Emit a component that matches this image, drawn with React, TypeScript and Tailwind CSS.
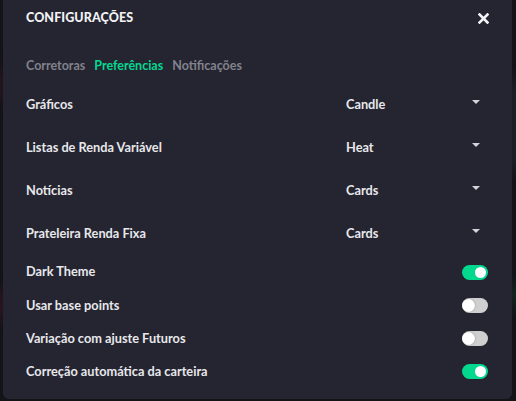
const font = { fontFamily: "Lato, 'Open Sans', sans-serif" };

type SelectRow = { label: string; value: string };
type ToggleRow = { label: string; on: boolean; h: string };

const selects: SelectRow[] = [
  { label: "Gráficos", value: "Candle" },
  { label: "Listas de Renda Variável", value: "Heat" },
  { label: "Notícias", value: "Cards" },
  { label: "Prateleira Renda Fixa", value: "Cards" },
];

const toggles: ToggleRow[] = [
  { label: "Dark Theme", on: true, h: "h-[34px]" },
  { label: "Usar base points", on: false, h: "h-[33px]" },
  { label: "Variação com ajuste Futuros", on: false, h: "h-[33px]" },
  { label: "Correção automática da carteira", on: true, h: "h-[33px]" },
];

function Toggle({ on }: { on: boolean }) {
  return (
    <span
      className={`relative flex h-[15px] w-[26px] items-center rounded-full ${
        on ? "justify-end bg-[#03d88f] pr-[2px]" : "justify-start bg-[#cfcfcf]"
      }`}
    >
      <span
        className={`rounded-full bg-white ${
          on ? "h-[11px] w-[11px]" : "h-[13px] w-[13px] shadow-[0_0_2px_rgba(0,0,0,0.35)]"
        }`}
      />
    </span>
  );
}

function Caret() {
  return (
    <svg width="8" height="4" viewBox="0 0 8 4" className="mb-[5px]">
      <path d="M0 0h8L4 4z" fill="#d4d4da" />
    </svg>
  );
}

export default function App() {
  return (
    <div className="relative h-[401px] w-[516px] overflow-hidden bg-[#131318]" style={font}>
      <div aria-hidden className="pointer-events-none absolute left-[-6px] top-[70px] h-[30px] w-[8px] bg-[#3a1a26] blur-sm" />
      <div aria-hidden className="pointer-events-none absolute left-[-6px] top-[290px] h-[30px] w-[8px] bg-[#4a1a2c] blur-sm" />
      <div aria-hidden className="pointer-events-none absolute right-[-4px] top-[80px] h-[90px] w-[6px] bg-[#3a3d4c] blur-sm" />
      <div aria-hidden className="pointer-events-none absolute right-[-4px] top-[285px] h-[20px] w-[6px] bg-[#0f5a3c] blur-sm" />

      <div className="relative ml-[3px] flex h-[399px] w-[509px] flex-col rounded-b-[6px] bg-[#242530] pl-[23px] pr-[24px]">
        <div className="flex h-[36px] items-center justify-between">
          <span className="text-[12.5px] font-black tracking-[0.1px] text-[#f2f2f4]">CONFIGURAÇÕES</span>
          <svg width="11" height="11" viewBox="0 0 11 11" className="mr-[-1px] mt-[1px]">
            <path d="M1.5 1.5l8 8M9.5 1.5l-8 8" stroke="#f4f4f6" strokeWidth="2.6" strokeLinecap="square" />
          </svg>
        </div>

        <div className="mt-[20px] flex h-[20px] items-center gap-[9px] text-[12.5px] font-bold">
          <span className="text-[#82828c]">Corretoras</span>
          <span className="text-[#03d88f]">Preferências</span>
          <span className="text-[#82828c]">Notificações</span>
        </div>

        <div className="mt-[7px] flex flex-col">
          {selects.map((s) => (
            <div key={s.label} className="flex h-[43px] items-center text-[12.75px] font-bold text-[#e8e8ec]">
              <span className="flex-1">{s.label}</span>
              <div className="flex w-[142px] items-center justify-between pr-[8px]">
                <span>{s.value}</span>
                <Caret />
              </div>
            </div>
          ))}
        </div>

        <div className="flex flex-col">
          {toggles.map((t) => (
            <div key={t.label} className={`flex ${t.h} items-center justify-between text-[12.75px] font-bold text-[#e8e8ec]`}>
              <span>{t.label}</span>
              <Toggle on={t.on} />
            </div>
          ))}
        </div>
      </div>
    </div>
  );
}
